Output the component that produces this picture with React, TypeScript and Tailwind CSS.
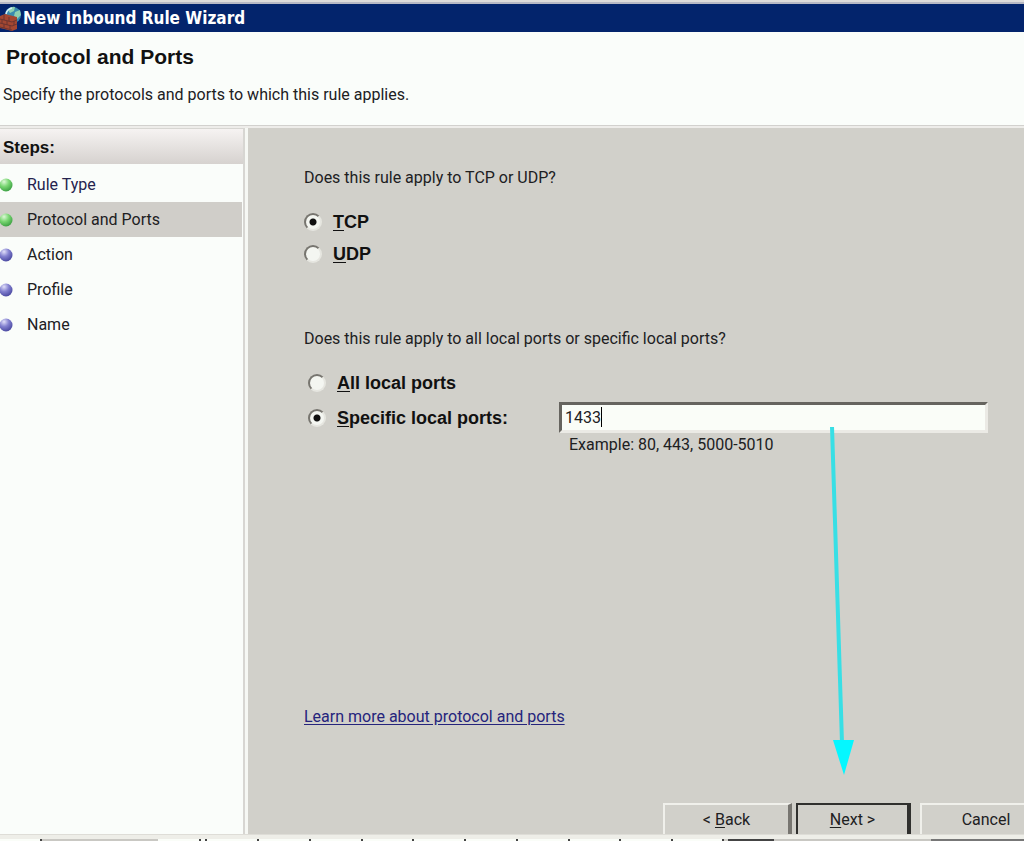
import { useState } from "react";

const steps = [
  { name: "Rule Type", done: true, visited: true },
  { name: "Protocol and Ports", done: true, current: true },
  { name: "Action" },
  { name: "Profile" },
  { name: "Name" },
];

const radio =
  "size-[18px] shrink-0 appearance-none rounded-full border-2 border-t-[#77756f] border-l-[#77756f] border-r-[#e6e6e0] border-b-[#e6e6e0] bg-[#f4f6f1] checked:bg-[radial-gradient(circle,#111_0_3px,#f4f6f1_4px)]";

function FirewallIcon() {
  return (
    <svg width="22" height="26" viewBox="0 0 22 26" aria-hidden="true">
      <circle cx="13" cy="10" r="8" fill="#3a8cae" />
      <path d="M8 5q3-4 7-3l-1 4-4 2zM15 7l5-2 1 5-4 4-3-3z" fill="#8fd0b0" />
      <path d="M6 9q1-5 6-6" fill="none" stroke="#d5eef4" strokeWidth="1.5" />
      <path d="M0 11l5-2 12 3v12l-5 2-12-3z" fill="#a44731" />
      <path d="M0 14l12 3 5-2M0 18l12 3 5-2M0 22l12 3M4 10v5M9 12v4M2 15v3M7 16v4M4 19v4M10 20v4M14 16v4" fill="none" stroke="#6b3530" />
    </svg>
  );
}

function StepDot({ done }: { done?: boolean }) {
  return (
    <svg width="13" height="16" viewBox="0 0 13 16" aria-hidden="true" className="shrink-0">
      <defs>
        <radialGradient id="dot-done" cx="35%" cy="25%" r="75%">
          <stop offset="0" stopColor="#dcf8d6" />
          <stop offset=".5" stopColor="#79d672" />
          <stop offset="1" stopColor="#3fa345" />
        </radialGradient>
        <radialGradient id="dot-todo" cx="35%" cy="25%" r="75%">
          <stop offset="0" stopColor="#e0dff9" />
          <stop offset=".5" stopColor="#8280cf" />
          <stop offset="1" stopColor="#4d4ca3" />
        </radialGradient>
      </defs>
      <circle cx="6" cy="8" r="6.5" fill={done ? "url(#dot-done)" : "url(#dot-todo)"} />
    </svg>
  );
}

export default function App() {
  const [protocol, setProtocol] = useState("tcp");
  const [scope, setScope] = useState("specific");
  const [ports, setPorts] = useState("1433");

  return (
    <div className="flex min-h-screen flex-col overflow-hidden bg-[#d1d0ca] font-['Roboto',sans-serif] text-[16px] leading-6 text-[#20201f]">
      <div className="border-t-2 border-[#dedcda] bg-[#b8b9c4] pt-[2px]">
        <div className="flex h-7 items-center gap-px bg-[#03246c] text-white">
          <FirewallIcon />
          <h1 className="font-['DejaVu_Sans_Condensed','DejaVu_Sans',sans-serif] text-[17px] font-bold">New Inbound Rule Wizard</h1>
        </div>
      </div>

      <header className="border-b border-[#d2d1ce] bg-[#fafdfa] pt-[13px] pb-[18px]">
        <h2 className="px-[6px] font-['Liberation_Sans',sans-serif] text-[21px] font-bold text-[#111]">Protocol and Ports</h2>
        <p className="mt-[14px] px-[3px]">Specify the protocols and ports to which this rule applies.</p>
      </header>

      <div className="flex flex-1 border-t-2 border-[#eeedea]">
        <nav aria-label="Steps" className="w-[245px] shrink-0 border-t border-r-2 border-[#d7d6d2] bg-[#fafdfa]">
          <h3 className="bg-linear-to-b from-[#f6f3f2] to-[#d6d2cf] px-[3px] pt-[7px] pb-1 font-['Liberation_Sans',sans-serif] text-[17px] font-bold text-[#111]">Steps:</h3>
          <ol className="pt-[3px] pr-px">
            {steps.map((step) => (
              <li
                key={step.name}
                aria-current={step.current ? "step" : undefined}
                className={`flex h-[35px] items-center gap-[14px] ${step.current ? "bg-[#d0cec9]" : ""} ${step.visited ? "text-[#25234e]" : ""}`}
              >
                <StepDot done={step.done} />
                {step.name}
              </li>
            ))}
          </ol>
        </nav>

        <main className="flex min-w-0 flex-1 flex-col border-l-3 border-[#f6f8f4] pt-[38px] pl-14">
          <fieldset>
            <legend>Does this rule apply to TCP or UDP?</legend>
            <div className="flex flex-col gap-2 pt-5 font-['Liberation_Sans',sans-serif] text-[18px] font-bold text-[#111]">
              <label className="flex items-center gap-[11px] self-start">
                <input type="radio" name="protocol" className={radio} checked={protocol === "tcp"} onChange={() => setProtocol("tcp")} />
                <span><u className="underline-offset-2">T</u>CP</span>
              </label>
              <label className="flex items-center gap-[11px] self-start">
                <input type="radio" name="protocol" className={radio} checked={protocol === "udp"} onChange={() => setProtocol("udp")} />
                <span><u className="underline-offset-2">U</u>DP</span>
              </label>
            </div>
          </fieldset>

          <fieldset className="mt-[61px]">
            <legend>Does this rule apply to all local ports or specific local ports?</legend>
            <div className="flex flex-col pt-5 pl-1">
              <label className="flex items-center gap-[11px] self-start font-['Liberation_Sans',sans-serif] text-[18px] font-bold text-[#111]">
                <input type="radio" name="scope" className={radio} checked={scope === "all"} onChange={() => setScope("all")} />
                <span><u className="underline-offset-2">A</u>ll local ports</span>
              </label>
              <div className="mt-[7px] flex items-center pr-9">
                <label className="flex w-[251px] shrink-0 items-center gap-[11px] font-['Liberation_Sans',sans-serif] text-[18px] font-bold text-[#111]">
                  <input type="radio" name="scope" className={radio} checked={scope === "specific"} onChange={() => setScope("specific")} />
                  <span><u className="underline-offset-2">S</u>pecific local ports:</span>
                </label>
                <div className="relative min-w-0 flex-1">
                  <input
                    type="text"
                    aria-label="Specific local ports"
                    aria-describedby="ports-example"
                    value={ports}
                    onChange={(e) => setPorts(e.target.value)}
                    className="block h-[31px] w-full border-3 border-t-[#66645f] border-l-[#66645f] border-r-[#ebeae5] border-b-[#ebeae5] bg-[#fafdf8] px-[3px] outline-none"
                  />
                  <span className="absolute top-[5px] left-[42px] h-5 w-px bg-black" />
                </div>
              </div>
              <p id="ports-example" className="pl-[261px]">Example: 80, 443, 5000-5010</p>
            </div>
          </fieldset>

          <a href="#learn-more" className="mt-auto self-start text-[#25247c] underline underline-offset-2">Learn more about protocol and ports</a>

          <div className="mt-[74px] -mr-[26px] flex justify-end">
            <button type="button" className="h-[31px] w-[129px] border-t-2 border-r-4 border-l-2 border-t-[#f0f0eb] border-r-[#777570] border-l-[#f0f0eb]">
              &lt; <u className="underline-offset-2">B</u>ack
            </button>
            <button type="button" className="ml-1 h-[31px] w-[115px] border-t-2 border-r-4 border-l-2 border-[#30302e]">
              <u className="underline-offset-2">N</u>ext &gt;
            </button>
            <button type="button" className="ml-[9px] h-[31px] w-[130px] border-t-2 border-l-2 border-[#f0f0eb]">Cancel</button>
          </div>
        </main>
      </div>

      <footer className="border-t border-[#deddd7]">
        <svg className="block h-[6px] w-full" viewBox="0 0 1024 6" preserveAspectRatio="none" aria-hidden="true">
          <path fill="#eeeee8" d="M0 0h1024v4H0z" />
          <path fill="#fafdf8" d="M0 4h40v2H0zM158 4h565v2H158z" />
          <path fill="#c9c8c3" d="M41 4h117v2H41zM774 4h157v2H774z" />
          <path fill="#444" d="M40 4h2v2h-2zM199 4h2v2h-2zM205 4h2v2h-2zM257 4h2v2h-2zM309 4h2v2h-2zM361 4h2v2h-2zM412 4h2v2h-2zM464 4h2v2h-2zM516 4h2v2h-2zM568 4h2v2h-2zM619 4h2v2h-2zM671 4h2v2h-2zM722 4h2v2h-2zM728 4h46v2h-46z" />
          <path fill="#777" d="M931 4h93v2h-93z" />
        </svg>
      </footer>

      <svg className="pointer-events-none absolute top-[427px] left-[829px]" width="30" height="350" viewBox="0 0 30 350" aria-hidden="true">
        <path d="M3 0L13 316" stroke="#38dfe5" strokeWidth="4" />
        <path d="M4 313h21L15 348z" fill="#05f7ff" />
      </svg>
    </div>
  );
}
